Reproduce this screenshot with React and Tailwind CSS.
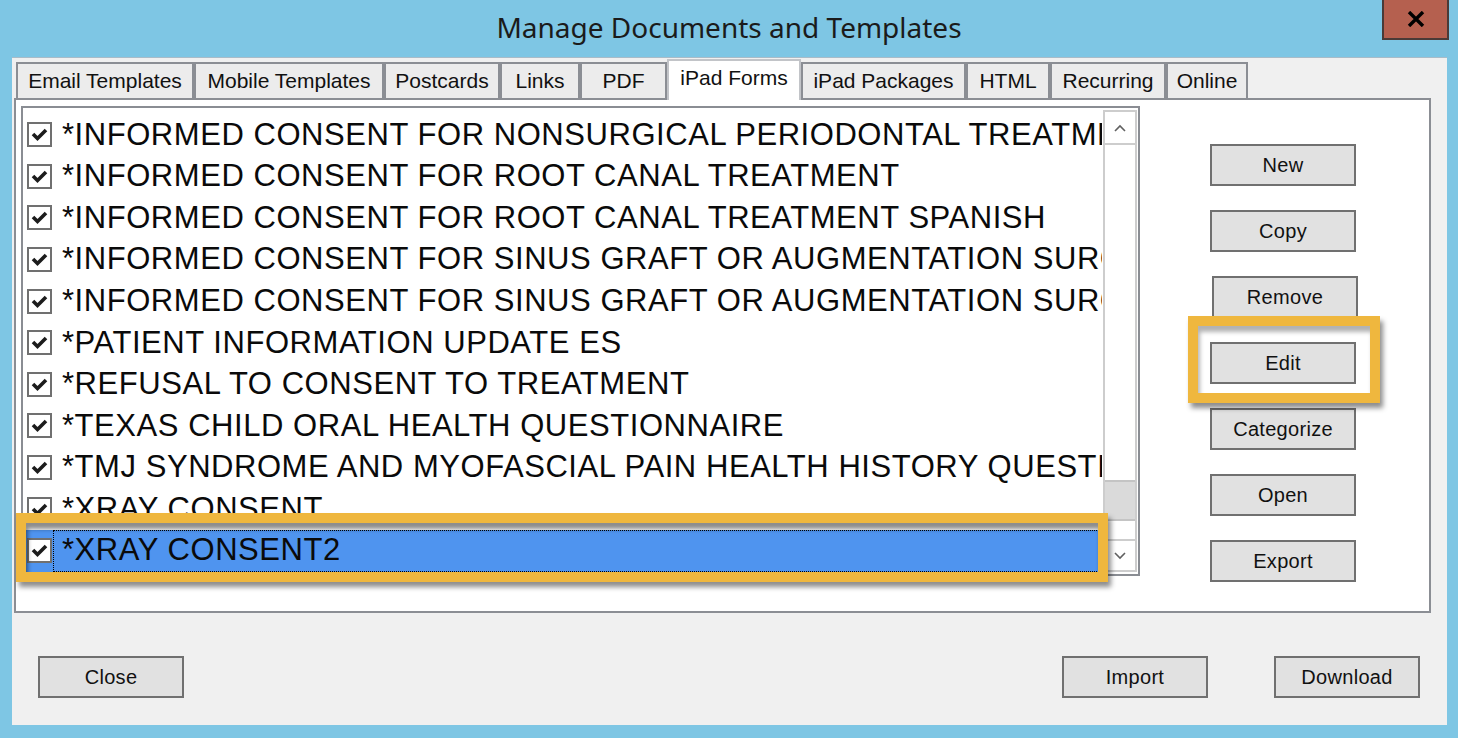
import React from 'react';

const tabs = [
  { label: 'Email Templates', width: 'w-[178px]' },
  { label: 'Mobile Templates', width: 'w-[190px]' },
  { label: 'Postcards', width: 'w-[116px]' },
  { label: 'Links', width: 'w-[80px]' },
  { label: 'PDF', width: 'w-[87px]' },
  { label: 'iPad Forms', width: 'w-[134px]', active: true },
  { label: 'iPad Packages', width: 'w-[165px]' },
  { label: 'HTML', width: 'w-[84px]' },
  { label: 'Recurring', width: 'w-[116px]' },
  { label: 'Online', width: 'w-[82px]' },
];

const forms = [
  '*INFORMED CONSENT FOR NONSURGICAL PERIODONTAL TREATMENT',
  '*INFORMED CONSENT FOR ROOT CANAL TREATMENT',
  '*INFORMED CONSENT FOR ROOT CANAL TREATMENT SPANISH',
  '*INFORMED CONSENT FOR SINUS GRAFT OR AUGMENTATION SURGERY',
  '*INFORMED CONSENT FOR SINUS GRAFT OR AUGMENTATION SURGERY SPANISH',
  '*PATIENT INFORMATION UPDATE ES',
  '*REFUSAL TO CONSENT TO TREATMENT',
  '*TEXAS CHILD ORAL HEALTH QUESTIONNAIRE',
  '*TMJ SYNDROME AND MYOFASCIAL PAIN HEALTH HISTORY QUESTIONNAIRE',
  '*XRAY CONSENT',
  '*XRAY CONSENT2',
];

const sideButtons = ['New', 'Copy', 'Remove', 'Edit', 'Categorize', 'Open', 'Export'];

function WinButton({ label, className = '' }) {
  return (
    <button
      className={`w-[146px] h-[42px] border-2 border-[#707070] bg-[#e1e1e1] text-[20px] tracking-[0.3px] leading-none text-[#111] flex items-center justify-center ${className}`}
    >
      {label}
    </button>
  );
}

function CheckBox() {
  return (
    <div className="w-[25px] h-[25px] shrink-0 border-2 border-[#707070] bg-white flex items-center justify-center">
      <svg width="21" height="21" viewBox="0 0 21 21">
        <polyline points="4,10 8.5,14.5 17,6" fill="none" stroke="#1c1c1c" strokeWidth="3.6" />
      </svg>
    </div>
  );
}

export default function App() {
  return (
    <div className="w-[1458px] h-[738px] bg-[#7ec6e4] flex flex-col font-['Liberation_Sans',Arial,sans-serif] overflow-hidden">
      {/* Title bar */}
      <div className="h-[57px] shrink-0 grid grid-cols-[1fr_auto_1fr]">
        <div />
        <div className="flex items-center text-[28px] text-[#1b1b1b] font-['Noto_Sans',sans-serif] pb-[4px]">
          Manage Documents and Templates
        </div>
        <div className="flex justify-end items-start pr-[9px]">
          <div className="w-[67px] h-[40px] bg-[#b5604f] border-2 border-t-0 border-[#4a3a37] flex items-center justify-center">
            <svg width="18" height="16" viewBox="0 0 18 16">
              <path d="M2 1 L16 15 M16 1 L2 15" stroke="#000" strokeWidth="3.4" />
            </svg>
          </div>
        </div>
      </div>

      {/* Dialog body */}
      <div className="ml-[12px] w-[1435px] h-[668px] bg-[#f0f0f0] border-t border-[#a9bcc8] flex flex-col">
        {/* Tabs */}
        <div className="flex items-end pl-[4px] pt-[1px]">
          {tabs.map(tab =>
            tab.active ? (
              <div
                key={tab.label}
                className={`${tab.width} h-[41px] -mb-[2px] z-10 bg-white border-2 border-b-0 border-[#c2c4c8] flex justify-center pt-[5px] text-[21px] leading-[24px] text-[#111]`}
              >
                {tab.label}
              </div>
            ) : (
              <div
                key={tab.label}
                className={`${tab.width} h-[36px] bg-[#ececec] border-2 border-b-0 border-[#8b8e94] flex items-center justify-center text-[21px] text-[#111]`}
              >
                {tab.label}
              </div>
            )
          )}
        </div>

        {/* Tab page */}
        <div className="relative ml-[2px] w-[1417px] h-[515px] shrink-0 bg-white border-2 border-[#8b8e94] flex items-start pl-[5px]">
          {/* List box */}
          <div className="mt-[6px] w-[1119px] h-[470px] border-2 border-[#8a8d93] flex">
            <div className="flex-1 overflow-hidden pt-[6px]">
              {forms.map((form, i) => {
                const selected = i === forms.length - 1;
                return (
                  <div
                    key={form}
                    className={`h-[41.6px] flex items-center pl-[4px] ${selected ? 'bg-[#4f94ef]' : ''}`}
                  >
                    <CheckBox />
                    <div
                      className={`ml-[1px] flex-1 h-full flex items-center pl-[8px] border whitespace-nowrap overflow-hidden text-[31px] tracking-[0.55px] text-[#0a0a0a] ${
                        selected ? 'border-dotted border-black' : 'border-transparent'
                      }`}
                    >
                      {form}
                    </div>
                  </div>
                );
              })}
            </div>

            {/* Scrollbar */}
            <div className="w-[34px] my-[2px] mr-[1px] border-2 border-[#cdcdcd] flex flex-col bg-white">
              <div className="h-[33px] border-b-2 border-[#cdcdcd] flex items-center justify-center">
                <svg width="12" height="8" viewBox="0 0 12 8">
                  <polyline points="1,7 6,2 11,7" fill="none" stroke="#606060" strokeWidth="1.6" />
                </svg>
              </div>
              <div className="flex-1" />
              <div className="h-[41px] bg-[#dadada] border-y-2 border-[#c4c4c4]" />
              <div className="h-[18px]" />
              <div className="h-[31px] border-t-2 border-[#cdcdcd] flex items-center justify-center">
                <svg width="12" height="8" viewBox="0 0 12 8">
                  <polyline points="1,1 6,6 11,1" fill="none" stroke="#606060" strokeWidth="1.6" />
                </svg>
              </div>
            </div>
          </div>

          {/* Action buttons */}
          <div className="ml-[70px] mt-[44px] flex flex-col gap-[24px]">
            {sideButtons.map(label => (
              <WinButton key={label} label={label} className={label === 'Remove' ? 'ml-[2px]' : ''} />
            ))}
          </div>

          {/* Highlight annotations */}
          <div className="absolute left-0 top-[413px] w-[1092px] h-[69px] border-[10px] border-[#efb73e] shadow-[3px_5px_5px_rgba(0,0,0,0.45),inset_2px_6px_4px_rgba(0,0,0,0.45)] pointer-events-none" />
          <div className="absolute left-[1172px] top-[216px] w-[192px] h-[87px] border-[10px] border-[#efb73e] shadow-[3px_5px_5px_rgba(0,0,0,0.45),inset_2px_6px_4px_rgba(0,0,0,0.3)] pointer-events-none" />
        </div>

        {/* Bottom buttons */}
        <div className="flex items-start pt-[43px] pl-[26px] pr-[27px]">
          <WinButton label="Close" />
          <div className="flex-1" />
          <WinButton label="Import" />
          <WinButton label="Download" className="ml-[66px]" />
        </div>
      </div>
    </div>
  );
}
